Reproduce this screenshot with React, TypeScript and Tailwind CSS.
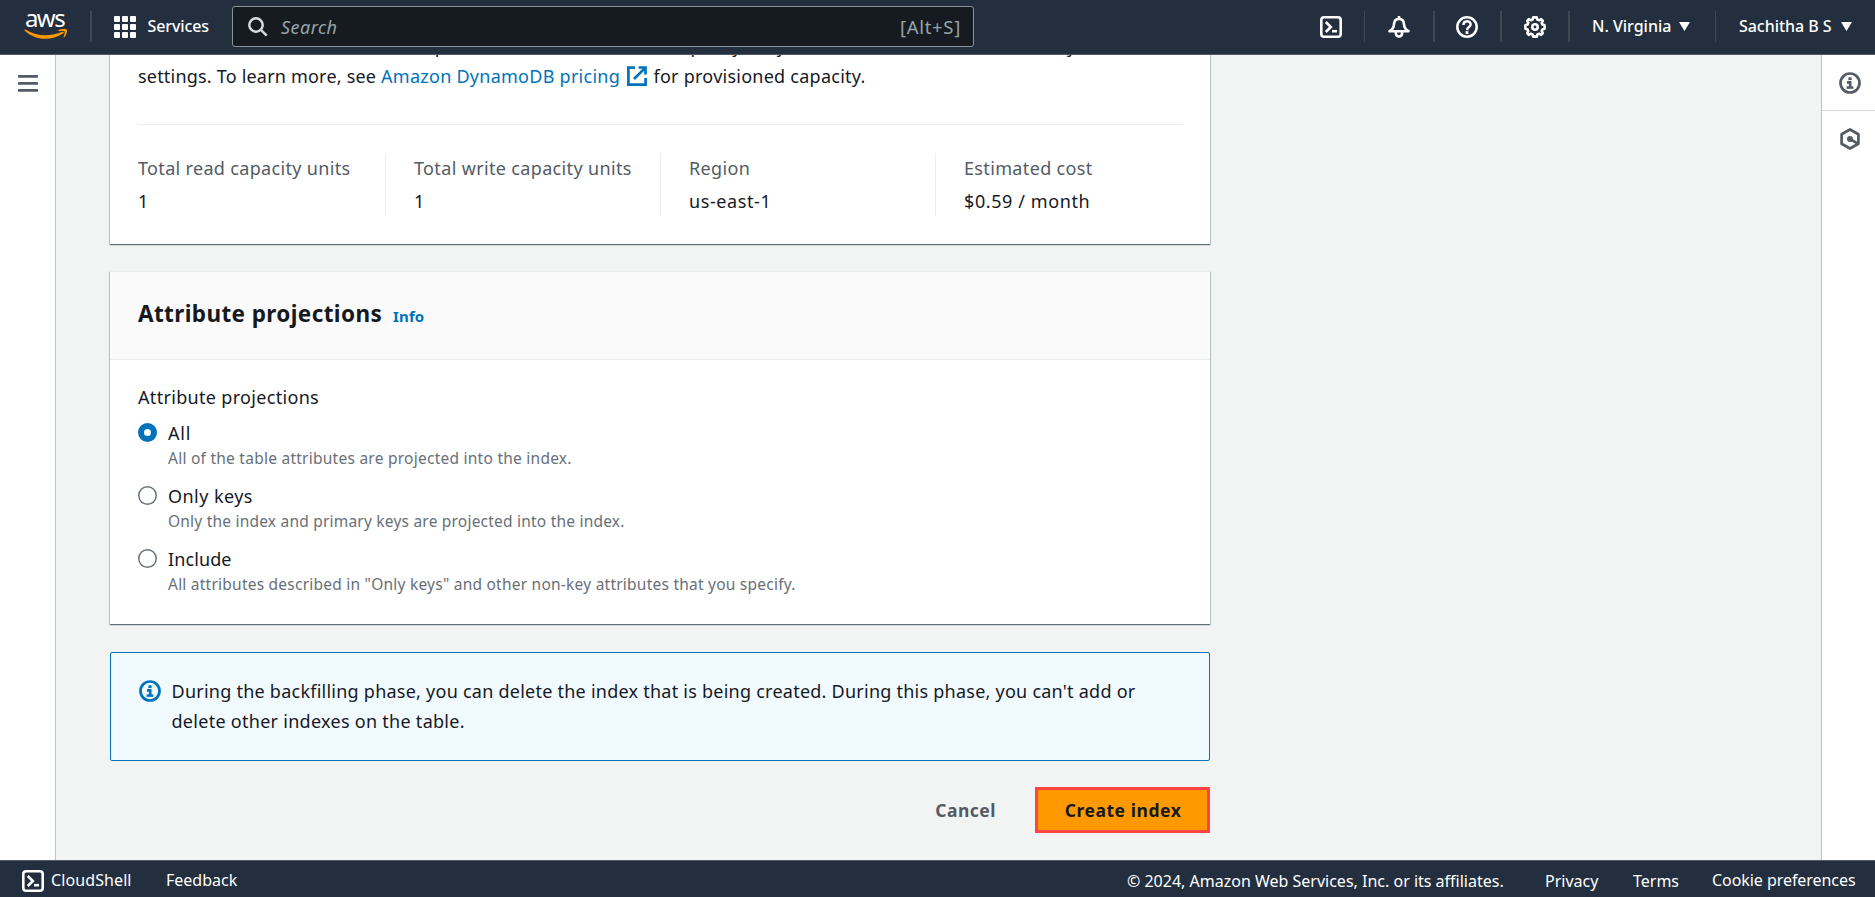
import type { ReactNode } from 'react';

function CloudShellIcon() {
  return (
    <svg className="size-[22px] shrink-0" viewBox="0 0 22 22" fill="none" stroke="currentColor" strokeWidth="2.6">
      <rect x="1.3" y="1.3" width="19.4" height="19.4" rx="2.8" />
      <path d="M5.8 6 L10.8 11 L5.8 16" />
      <path d="M12 15.2 H17" />
    </svg>
  );
}

function BellIcon() {
  return (
    <svg className="size-[22px] shrink-0" viewBox="0 0 22 22" fill="none" stroke="currentColor" strokeWidth="2.6" strokeLinejoin="round">
      <path d="M11 0 V3" />
      <path d="M1.5 15.2 C5 13.2 5.9 11.4 6 8.2 C6.2 4.8 8.2 2.9 11 2.9 C13.8 2.9 15.8 4.8 16 8.2 C16.1 11.4 17 13.2 20.5 15.2 Z" />
      <path d="M7.8 16 C7.8 22 14.2 22 14.2 16" />
    </svg>
  );
}

function HelpIcon() {
  return (
    <svg className="size-[22px] shrink-0" viewBox="0 0 22 22" fill="none" stroke="currentColor" strokeWidth="2.5">
      <circle cx="11" cy="11" r="9.7" />
      <path d="M7.4 9 C7.4 4 14.6 4 14.6 8.4 C14.6 11.2 11 10.8 11 14.2" />
      <path d="M9.6 16.6 H12.4" strokeWidth="2.8" />
    </svg>
  );
}

function GearIcon() {
  return (
    <svg className="size-[22px] shrink-0" viewBox="0 0 22 22" fill="none" stroke="currentColor" strokeWidth="2.6" strokeLinejoin="round">
      <path d="M9.2 1.4 H12.8 L13.4 3.6 L15.2 4.3 L17.2 3.2 L18.8 4.8 L17.7 6.8 L18.4 8.6 L20.6 9.2 V12.8 L18.4 13.4 L17.7 15.2 L18.8 17.2 L17.2 18.8 L15.2 17.7 L13.4 18.4 L12.8 20.6 H9.2 L8.6 18.4 L6.8 17.7 L4.8 18.8 L3.2 17.2 L4.3 15.2 L3.6 13.4 L1.4 12.8 V9.2 L3.6 8.6 L4.3 6.8 L3.2 4.8 L4.8 3.2 L6.8 4.3 L8.6 3.6 Z" />
      <circle cx="11" cy="11" r="2.7" />
    </svg>
  );
}

function InfoIcon() {
  return (
    <svg className="size-[22px] shrink-0" viewBox="0 0 22 22" fill="none" stroke="currentColor" strokeWidth="2.7">
      <circle cx="11" cy="11" r="9.5" />
      <path d="M9.4 6.7 H12.6" strokeWidth="2.8" />
      <path d="M8 10.4 H11.2 V16" strokeWidth="2.7" />
      <path d="M7.6 15.6 H14.4" strokeWidth="2.5" />
    </svg>
  );
}

function HexIcon() {
  return (
    <svg className="size-[22px] shrink-0" viewBox="0 0 22 22" fill="none" stroke="currentColor" strokeWidth="2.7" strokeLinejoin="round">
      <path d="M11 1.5 L19.4 6.2 V15.8 L11 20.5 L2.6 15.8 V6.2 Z" />
      <circle cx="11" cy="11" r="3" fill="currentColor" stroke="none" />
      <path d="M11 11 L18.4 15.4" />
    </svg>
  );
}

function ExternalIcon() {
  return (
    <svg className="mr-[6.5px] ml-[7px] inline-block h-[20px] w-[20px] align-[-3px]" viewBox="0 0 20 20" fill="none" stroke="currentColor" strokeWidth="2.7">
      <path d="M8 1.7 H1.4 V18.6 H18.6 V12" />
      <path d="M11.6 1.5 H18.5 V8.6" />
      <path d="M18.4 1.6 L7 13" />
    </svg>
  );
}

function Caret() {
  return (
    <svg className="h-[9px] w-[11px]" viewBox="0 0 11 9" fill="currentColor">
      <path d="M0 0 H11 L5.5 9 Z" />
    </svg>
  );
}

function Divider({ className }: { className: string }) {
  return <div className={`h-[31px] shrink-0 bg-[#414750] ${className}`} />;
}

function Stat({ label, value, labelClass, valueClass, first }: { label: string; value: string; labelClass: string; valueClass: string; first?: boolean }) {
  return (
    <div className={first ? 'w-[247px] shrink-0' : 'w-[275px] shrink-0 border-l border-[#eaeded] pl-7'}>
      <div className={`leading-[30px] text-[#545b64] ${labelClass}`}>{label}</div>
      <div className={`mt-[3px] leading-[30px] ${valueClass}`}>{value}</div>
    </div>
  );
}

function Option({ checked, label, labelClass, children, textClass }: { checked?: boolean; label: string; labelClass: string; children: ReactNode; textClass: string }) {
  return (
    <label className="flex gap-[11px]">
      <span
        className={
          checked
            ? 'mt-[2px] size-[19px] shrink-0 rounded-full border-[6px] border-[#0073bb] bg-white'
            : 'mt-[2px] size-[19px] shrink-0 rounded-full bg-white shadow-[inset_0_0_0_1.5px_#687078]'
        }
      />
      <span className="block">
        <span className={`block leading-6 ${labelClass}`}>{label}</span>
        <span className={`mt-[3px] block text-[15.5px] leading-5 text-[#687078] ${textClass}`}>{children}</span>
      </span>
    </label>
  );
}

const cardShadow = 'shadow-[0_1px_1px_0_rgba(0,28,36,0.45),1px_1px_1px_0_rgba(0,28,36,0.15),-1px_1px_1px_0_rgba(0,28,36,0.15)]';

export default function App() {
  return (
    <div className="flex h-[897px] w-[1875px] flex-col overflow-hidden bg-[#f2f3f3] font-['Noto_Sans',sans-serif] text-[18px] text-[#16191f]">
      <header className="flex h-[55px] shrink-0 items-start border-b border-[#545b64] bg-[#232f3e] text-[16px] leading-[22px] text-white">
        <div className="ml-[24px] flex w-[44px] flex-col pt-[10px]">
          <span className="h-[19px] pl-[1px] text-[24px] leading-[16px] tracking-[-1.6px]">aws</span>
          <svg className="h-[11px] w-[44px]" viewBox="0 0 44 11" fill="#ff9900">
            <path d="M0.4 1 C0.6 0.4 1.2 0.4 1.8 0.8 C13 7.6 26.5 7.8 38.4 2.8 C39.6 2.4 40.3 3.5 39.2 4.3 C27 12.6 11 11.4 0.7 1.8 Z" />
            <path d="M34.5 1.2 C37 -0.4 42 -0.3 42.8 0.7 C43.5 1.8 42.5 6.4 40.3 8.2 C39.7 8.6 39.2 8.3 39.5 7.7 C40.2 6 41.2 3.2 40.6 2.5 C40 1.7 37 2 35 2.2 C34.2 2.2 34 1.6 34.5 1.2 Z" />
          </svg>
        </div>
        <Divider className="mt-[11px] ml-[22px] w-[2px]" />
        <svg className="mt-[16px] ml-[22px] size-[22px]" viewBox="0 0 22 22" fill="currentColor">
          {[0, 8, 16].map((y) => [0, 8, 16].map((x) => <rect key={`${x}-${y}`} x={x} y={y} width="6" height="6" rx="1" />))}
        </svg>
        <span className="mt-[14.5px] ml-[11.5px] w-[73px] font-medium tracking-[-0.1px]">Services</span>
        <div className="mt-[6px] ml-[11.5px] flex h-[41px] w-[742px] items-center justify-between rounded-[3px] border border-[#879596] bg-[#161a21] pr-[12px] pl-[15px] text-[#95a5a6]">
          <div className="flex items-center">
            <svg className="size-[20px] text-[#d5dbdb]" viewBox="0 0 20 20" fill="none" stroke="currentColor" strokeWidth="2.5">
              <circle cx="8" cy="8" r="6.7" />
              <path d="M12.7 12.7 L18.7 18.7" />
            </svg>
            <span className="ml-[13px] text-[18px] tracking-[0.45px] italic">Search</span>
          </div>
          <span className="text-[18.5px] tracking-[0.7px]">[Alt+S]</span>
        </div>
        <div className="ml-auto flex items-start">
          <div className="mt-[16px]"><CloudShellIcon /></div>
          <Divider className="mt-[11px] ml-[22px] w-px" />
          <div className="mt-[16px] ml-[23px]"><BellIcon /></div>
          <Divider className="mt-[11px] ml-[23px] w-[2px]" />
          <div className="mt-[16px] ml-[21px]"><HelpIcon /></div>
          <Divider className="mt-[11px] ml-[22px] w-[2px]" />
          <div className="mt-[16px] ml-[22px]"><GearIcon /></div>
          <Divider className="mt-[11px] ml-[22px] w-[2px]" />
          <span className="mt-[15px] ml-[22px] w-[87px] font-medium">N. Virginia</span>
          <div className="mt-[22px] flex"><Caret /></div>
          <Divider className="mt-[11px] ml-[25px] w-px" />
          <span className="mt-[15px] ml-[23px] w-[102px] font-medium tracking-[-0.04px]">Sachitha B S</span>
          <div className="mt-[22px] mr-[23px] flex"><Caret /></div>
        </div>
      </header>

      <div className="flex min-h-0 flex-1">
        <nav className="w-[56px] shrink-0 border-r border-[#bfc6c6] bg-white pt-[20px] pl-[18px] text-[#545b64]">
          <svg className="h-[17px] w-[20px]" viewBox="0 0 20 17" fill="currentColor">
            <rect width="20" height="2.7" y="0" rx="0.5" />
            <rect width="20" height="2.7" y="7" rx="0.5" />
            <rect width="20" height="2.7" y="14" rx="0.5" />
          </svg>
        </nav>

        <main className="min-w-0 flex-1 overflow-hidden pl-[54px]">
          <div className="w-[1100px]">
            <section className={`-mt-[24px] h-[213px] bg-white px-7 ${cardShadow}`}>
              <p className="leading-[30px] whitespace-nowrap">
                <span className="block h-[30px] tracking-[0.2px]">Here is the estimated total cost of provisioned read and write capacity for your table and indexes, based on your</span>
                <span className="tracking-[0.2px]">settings. To learn more, see </span>
                <span className="tracking-[0.26px] text-[#0073bb]">Amazon DynamoDB pricing<ExternalIcon /></span>
                <span className="tracking-[0.25px]">for provisioned capacity.</span>
              </p>
              <div className="mt-[33px] -mr-px flex border-t border-[#eaeded] pt-7">
                <Stat first label="Total read capacity units" value="1" labelClass="tracking-[0.33px]" valueClass="" />
                <Stat label="Total write capacity units" value="1" labelClass="tracking-[0.35px]" valueClass="" />
                <Stat label="Region" value="us-east-1" labelClass="tracking-[0.36px]" valueClass="tracking-[0.6px]" />
                <Stat label="Estimated cost" value="$0.59 / month" labelClass="tracking-[0.35px]" valueClass="tracking-[0.6px]" />
              </div>
            </section>

            <section className={`mt-[27px] h-[353px] border-t border-[#eaeded] bg-white ${cardShadow}`}>
              <div className="flex h-[88px] items-baseline border-b border-[#eaeded] bg-[#fafafa] px-7 pt-[27px]">
                <h2 className="text-[22.5px] leading-[30px] font-bold tracking-[0.39px]">Attribute projections</h2>
                <span className="ml-[11px] text-[15px] font-bold tracking-[0.1px] text-[#0073bb]">Info</span>
              </div>
              <div className="px-7 pt-[22px]">
                <div className="leading-[30px] tracking-[0.32px]">Attribute projections</div>
                <div className="mt-[9px] flex flex-col gap-[16px]">
                  <Option checked label="All" labelClass="tracking-[0.8px]" textClass="tracking-[0.25px]">All of the table attributes are projected into the index.</Option>
                  <Option label="Only keys" labelClass="tracking-[0.45px]" textClass="tracking-[0.21px]">Only the index and primary keys are projected into the index.</Option>
                  <Option label="Include" labelClass="tracking-[0.1px]" textClass="tracking-[0.232px]">All attributes described in "Only keys" and other non-key attributes that you specify.</Option>
                </div>
              </div>
            </section>

            <section className="mt-[28px] flex h-[109px] rounded-[2px] border border-[#0073bb] bg-[#f1faff] pt-[23px] pl-7">
              <div className="mt-[4px] text-[#0073bb]"><InfoIcon /></div>
              <p className="ml-[10.5px] leading-[30px] whitespace-nowrap">
                <span className="block tracking-[0.243px]">During the backfilling phase, you can delete the index that is being created. During this phase, you can't add or</span>
                <span className="block tracking-[0.28px]">delete other indexes on the table.</span>
              </p>
            </section>

            <div className="mt-[26px] flex items-center justify-end text-[17.5px] font-bold">
              <button className="mr-[39px] tracking-[0.5px] text-[#545b64]">Cancel</button>
              <button className="h-[46px] w-[175px] border-[3px] border-[#ff4343] bg-[#ff9900] pl-px tracking-[0.55px]">Create index</button>
            </div>
          </div>
        </main>

        <aside className="w-[54px] shrink-0 border-l border-[#bfc6c6] bg-white text-[#545b64]">
          <div className="flex h-[56px] border-b border-[#d5dbdb] pt-[17px] pl-[17px]"><InfoIcon /></div>
          <div className="flex pt-[17px] pl-[17px]"><HexIcon /></div>
        </aside>
      </div>

      <footer className="flex h-[37px] shrink-0 items-start border-t border-[#545b64] bg-[#232f3e] text-[16px] leading-[22px] whitespace-nowrap text-white">
        <div className="mt-[9px] ml-[22px]"><CloudShellIcon /></div>
        <span className="mt-[8px] ml-[7px] w-[115px] tracking-[0.1px]">CloudShell</span>
        <span className="mt-[8px]">Feedback</span>
        <div className="ml-auto flex">
          <span className="mt-[9px] w-[418px]">© 2024, Amazon Web Services, Inc. or its affiliates.</span>
          <span className="mt-[9px] w-[88px]">Privacy</span>
          <span className="mt-[9px] w-[79px]">Terms</span>
          <span className="mt-[8px] w-[163px] tracking-[-0.06px]">Cookie preferences</span>
        </div>
      </footer>
    </div>
  );
}
